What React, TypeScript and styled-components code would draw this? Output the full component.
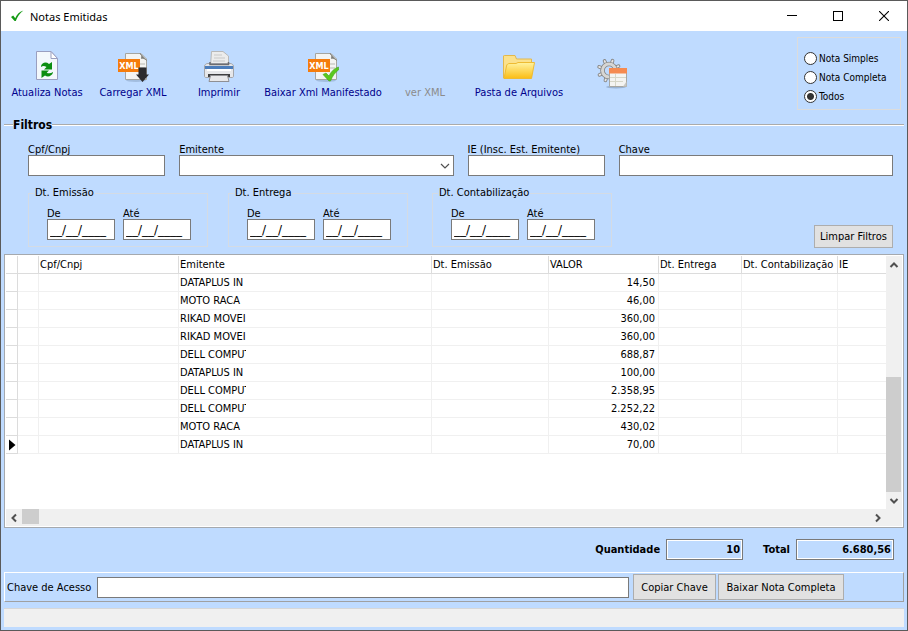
import React, { useState } from "react";
import styled, { createGlobalStyle } from "styled-components";

const UI_FONT = '"DejaVu Sans Condensed", "DejaVu Sans", sans-serif';
const BLUE = "#bfdbff";

const GlobalStyle = createGlobalStyle`
  * { box-sizing: border-box; }
  body { margin: 0; background: ${BLUE}; }
  body, button, input, select { font-family: ${UI_FONT}; font-size: 11px; color: #000; }
  button, input, select { margin: 0; border-radius: 0; }
`;

const Window = styled.div`
  display: flex;
  flex-direction: column;
  min-height: 100vh;
  border: 1px solid #5a5a5a;
  background: ${BLUE};
`;

const TitleBar = styled.header`
  display: flex;
  align-items: center;
  height: 30px;
  padding-left: 9px;
  background: #fff;
`;

const Title = styled.h1`
  flex: 1;
  margin: 0 0 0 6px;
  font: 400 11px "Noto Sans", sans-serif;
`;

const CaptionButton = styled.button`
  display: flex;
  align-items: center;
  justify-content: center;
  width: 46px;
  height: 30px;
  padding: 0;
  border: 0;
  background: none;
`;

const Content = styled.main`
  display: flex;
  flex: 1;
  flex-direction: column;
  padding: 0 3px 3px;
`;

const Toolbar = styled.div`
  display: flex;
  align-items: flex-start;
  gap: 6px;
  height: 87px;
  padding: 6px 3px 0;
`;

const ToolButton = styled.button<{ $width: number; $iconOnly?: boolean }>`
  display: flex;
  flex-direction: column;
  align-items: center;
  justify-content: center;
  gap: 3px;
  width: ${(p) => p.$width}px;
  height: 72px;
  padding: ${(p) => (p.$iconOnly ? 0 : 5)}px 0 0;
  border: 0;
  background: none;
  color: #00008b;
  white-space: nowrap;
  line-height: 14px;
  &:disabled { color: #8b8b8b; }
`;

const IconSlot = styled.span`
  display: block;
  width: 32px;
  height: 32px;
`;

const RadioBox = styled.fieldset`
  width: 104px;
  height: 73px;
  margin: 0 0 0 auto;
  padding: 11px 0 0 6px;
  border: 1px solid #dcdcdc;
`;

const RadioLabel = styled.label`
  display: flex;
  align-items: center;
  gap: 2px;
  height: 19px;
  font-size: 10px;
  line-height: 12px;
  white-space: nowrap;
`;

const Radio = styled.input`
  appearance: none;
  width: 13px;
  height: 13px;
  border: 1px solid #333;
  border-radius: 50%;
  background: #fff;
  &:checked { background: radial-gradient(circle, #333 0 3px, #fff 4px); }
`;

const Filters = styled.fieldset`
  min-width: 0;
  margin: 0;
  padding: 12px 11px 6px 24px;
  border: 0;
  border-top: 2px groove #fff;
`;

const FiltersLegend = styled.legend`
  margin-left: -15px;
  padding: 0;
  font-size: 12px;
  font-weight: 700;
  line-height: 14px;
`;

const FieldRow = styled.div`
  display: flex;
  gap: 14px;
`;

const Field = styled.label<{ $grow?: number }>`
  display: flex;
  flex: ${(p) => (p.$grow ? `${p.$grow} 1 0` : "0 0 68px")};
  flex-direction: column;
  min-width: 0;
  line-height: 11px;
  white-space: nowrap;
`;

const TextBox = styled.input`
  width: 100%;
  height: 21px;
  padding: 0 4px;
  border: 1px solid #7a7a7a;
  background: #fff;
`;

const DateBox = styled(TextBox)`
  padding: 0 2px;
  font-family: "DejaVu Sans", sans-serif;
  font-size: 12px;
`;

const SelectWrap = styled.span`
  display: grid;
  align-items: center;
  > * { grid-area: 1 / 1; }
  > svg { justify-self: end; margin-right: 4px; pointer-events: none; }
`;

const Select = styled.select`
  appearance: none;
  width: 100%;
  height: 21px;
  border: 1px solid #7a7a7a;
  background: #fff;
`;

const DateRow = styled.div`
  display: flex;
  align-items: flex-end;
  justify-content: space-between;
  padding-top: 10px;
`;

const DateGroups = styled.div`
  display: grid;
  grid-template-columns: 200px 204px 180px;
  align-items: end;
  padding-bottom: 1px;
`;

const DateGroup = styled.fieldset`
  display: flex;
  gap: 8px;
  width: 180px;
  margin: 0;
  padding: 8px 0 6px 18px;
  border: 1px solid #d4dbe4;
`;

const GroupLegend = styled.legend`
  margin-left: -13px;
  padding: 0 1px;
  line-height: 14px;
`;

const PushButton = styled.button<{ $width: number; $height: number }>`
  width: ${(p) => p.$width}px;
  height: ${(p) => p.$height}px;
  padding: 0;
  border: 1px solid #adadad;
  background: #e1e1e1;
  white-space: nowrap;
`;

const GridPanel = styled.section`
  display: grid;
  flex: 1;
  grid-template-columns: 1fr 16px;
  grid-template-rows: 1fr 17px;
  min-height: 260px;
  padding: 1px;
  border: 1px solid #a5a9ae;
  background: #fff;
`;

const Table = styled.table`
  width: 100%;
  border-collapse: separate;
  border-spacing: 0;
  table-layout: fixed;
  align-self: start;
`;

const Col = styled.col<{ $width?: number }>`
  width: ${(p) => (p.$width ? `${p.$width}px` : "auto")};
`;

const HeadCell = styled.th`
  height: 18px;
  padding: 0 1px;
  border-right: 1px solid #dcdcdc;
  border-bottom: 1px solid #dcdcdc;
  font-weight: 400;
  line-height: 17px;
  text-align: left;
  white-space: nowrap;
  &:last-child { border-right: 0; }
`;

const Cell = styled.td<{ $numeric?: boolean }>`
  height: 18px;
  padding: 0 ${(p) => (p.$numeric ? 3 : 1)}px 0 1px;
  border-right: 1px solid #f0f0f0;
  border-bottom: 1px solid #f0f0f0;
  line-height: 17px;
  text-align: ${(p) => (p.$numeric ? "right" : "left")};
  &:first-child { border-color: #dcdcdc; padding-left: 3px; }
  &:last-child { border-right: 0; }
  > svg { display: block; }
`;

const ClippedName = styled.span`
  display: block;
  width: 66px;
  overflow: hidden;
  white-space: nowrap;
`;

const ScrollTrack = styled.div<{ $vertical?: boolean }>`
  display: flex;
  flex-direction: ${(p) => (p.$vertical ? "column" : "row")};
  background: #f0f0f0;
`;

const ScrollButton = styled.button`
  display: flex;
  align-items: center;
  justify-content: center;
  width: 16px;
  height: 17px;
  padding: 0;
  border: 0;
  background: none;
`;

const ScrollSpace = styled.div`
  flex: 1;
`;

const ThumbV = styled.div`
  width: 15px;
  height: 115px;
  background: #cdcdcd;
`;

const ThumbH = styled.div`
  width: 17px;
  height: 15px;
  background: #cdcdcd;
`;

const ScrollCorner = styled.div`
  background: #f0f0f0;
`;

const Totals = styled.div`
  display: flex;
  align-items: center;
  justify-content: flex-end;
  gap: 20px;
  height: 44px;
  padding: 0 10px 1px 0;
`;

const TotalField = styled.label`
  display: flex;
  align-items: center;
  gap: 6px;
  font-weight: 700;
`;

const TotalBox = styled.input<{ $width: number }>`
  width: ${(p) => p.$width}px;
  height: 21px;
  padding: 0 2px;
  border: 1px solid #7a7a7a;
  outline: 1px solid #fff;
  outline-offset: -2px;
  background: ${BLUE};
  font-weight: 700;
  text-align: right;
`;

const AccessPanel = styled.div`
  display: flex;
  align-items: center;
  height: 30px;
  padding: 0 59px 0 2px;
  border: 1px solid;
  border-color: #fff #a0a0a0 #a0a0a0 #fff;
`;

const AccessField = styled.label`
  display: flex;
  flex: 1;
  align-items: center;
  gap: 6px;
  margin-right: 4px;
  white-space: nowrap;
`;

const ButtonPair = styled.div`
  display: flex;
  gap: 2px;
`;

const StatusBar = styled.footer`
  height: 19px;
  margin-top: 6px;
  border-top: 1px solid #d7d7d7;
  background: #f0f0f0;
`;

const CheckIcon = () => (
  <svg width="14" height="14" viewBox="0 0 14 14">
    <path d="M1 8 L3.2 6.500 L5.2 9.200 C6.8 5.600 9 3 13.400 1.500 C9.6 4.6 7.4 7.6 5.8 12 L4.600 12 Z" fill="#149a14" />
  </svg>
);

const MinimizeIcon = () => (
  <svg width="10" height="10" viewBox="0 0 10 10"><path d="M0 4.500H10" stroke="#000" /></svg>
);

const MaximizeIcon = () => (
  <svg width="10" height="10" viewBox="0 0 10 10"><rect x="0.5" y="0.5" width="9" height="9" fill="none" stroke="#000" /></svg>
);

const CloseIcon = () => (
  <svg width="10" height="10" viewBox="0 0 10 10"><path d="M0 0L10 10M10 0L0 10" stroke="#000" strokeWidth="1.1" /></svg>
);

const RefreshIcon = () => (
  <svg width="32" height="32" viewBox="0 0 32 32">
    <path d="M5.5 0.500H20L26.500 7.500V28.500H5.500Z" fill="#f3f8fc" stroke="#9a9fc0" />
    <path d="M20 0.500V7.500H26.500Z" fill="#fff" stroke="#9a9fc0" strokeLinejoin="round" />
    <path d="M10 15C11 11.500 15 10.500 18 13L21 11V18.500H13L15.500 16C13.500 14.500 11.500 14.500 10 16Z" fill="#0c8e12" />
    <path d="M22 21.500C21 25 17 26.500 14 24.500L10.500 27V19.500H18L15.700 21.700C17.500 22.700 20 22.500 22 21Z" fill="#0c8e12" />
  </svg>
);

const XmlDocument = () => (
  <>
    <ellipse cx="19" cy="29.500" rx="10" ry="1.500" fill="#7890b0" opacity="0.4" />
    <path d="M8.500 2.500H24L29.500 8V28.500H8.500Z" fill="#f4f4f2" stroke="#a5a5a0" />
    <path d="M23 2.500L29.500 9.500C28 7.500 26 7 24.500 7.500C25 5 24.500 3.500 23 2.500Z" fill="#777" stroke="#8a8a86" />
    <path d="M23 13H28M23 17H28" stroke="#d6d6d2" strokeWidth="2" />
    <rect x="1" y="8" width="22" height="13" fill="#f57c0c" />
    <text x="12" y="18" fill="#fff" fontFamily="DejaVu Sans Condensed" fontSize="9" fontWeight="700" textAnchor="middle">XML</text>
  </>
);

const XmlDownloadIcon = () => (
  <svg width="32" height="32" viewBox="0 0 32 32">
    <XmlDocument />
    <path d="M21.500 16.500H29.500V23.500H32L25.500 31L19 23.500H21.500Z" fill="#2b2b2e" />
  </svg>
);

const XmlCheckIcon = () => (
  <svg width="32" height="32" viewBox="0 0 32 32">
    <XmlDocument />
    <path d="M16 23.500L19 22L22 25C24 20.500 27 17.500 31.500 16V19C28 21.500 25.500 25 23.500 30H22Z" fill="#5ac81e" stroke="#3fa512" strokeWidth="0.6" />
  </svg>
);

const PrinterIcon = () => (
  <svg width="32" height="32" viewBox="0 0 32 32">
    <path d="M8.500 0.500H20L25.500 5V15H7.500Z" fill="#ececec" stroke="#b8b8b8" />
    <path d="M11 4H19M11 7H22M10 10H22" stroke="#d4d4d4" strokeWidth="1.500" />
    <path d="M5 12.500H27C29 12.500 30 13.500 30.500 15V25C30.500 26 30 26.500 29 26.500H3C2 26.500 1.500 26 1.500 25V15C2 13.500 3 12.500 5 12.500Z" fill="#e6e7ea" stroke="#a4a6ab" />
    <path d="M7 11V13.500H25.500V11" fill="none" stroke="#6c6c70" strokeWidth="1.500" />
    <path d="M2 15H30V18H2Z" fill="#4c7dbb" />
    <path d="M4 18H28V20H4Z" fill="#fff" />
    <path d="M5 23H27V26H5Z" fill="#3e3e40" />
    <path d="M7.500 24.500H24.500L26 30.500H6Z" fill="#e8e8ea" stroke="#8f8f93" />
  </svg>
);

const FolderIcon = () => (
  <svg width="32" height="32" viewBox="0 0 32 32">
    <defs>
      <linearGradient id="folderFront" x1="0" y1="0" x2="0" y2="1">
        <stop offset="0" stopColor="#fff3a0" />
        <stop offset="1" stopColor="#fbbd14" />
      </linearGradient>
    </defs>
    <path d="M0.500 27V5C0.500 4.500 1 4.500 1.500 4.500H12L13.500 8H28.500V26Z" fill="#fbe18c" stroke="#e3b84c" />
    <path d="M3.500 15C4 13 5 12.500 7 12.500H13L15 11.500H31.500L28.500 27.500H1Z" fill="url(#folderFront)" stroke="#eebb33" />
  </svg>
);

const TEETH = [0, 45, 90, 135, 180, 225, 270, 315];

const GearSheetIcon = () => (
  <svg width="32" height="32" viewBox="0 0 32 32">
    <ellipse cx="20" cy="30" rx="10" ry="1.500" fill="#60758f" opacity="0.4" />
    {TEETH.map((angle) => (
      <g key={angle} transform={`rotate(${angle + 20} 13 13.500)`} strokeLinecap="round">
        <path d="M13 7V3" stroke="#858585" strokeWidth="3.600" />
        <path d="M13 7V3" stroke="#e6e6e6" strokeWidth="1.800" />
      </g>
    ))}
    <circle cx="13" cy="13.500" r="6.500" fill="none" stroke="#858585" strokeWidth="4.600" />
    <circle cx="13" cy="13.500" r="6.500" fill="none" stroke="#d6d6d4" strokeWidth="3" />
    <path d="M13.500 11.500H30.500V29.500H13.500Z" fill="#f4f4f2" stroke="#a7a7a3" />
    <path d="M13 11H31V16.500H13Z" fill="#f58a50" />
    <path d="M14 20.500H30M14 24.500H27M19.500 17V29" stroke="#d6d6c8" />
    <path d="M30.500 24.500L27 29.500H30.500Z" fill="#c8c8c4" />
  </svg>
);

const rotations = { up: 0, right: 90, down: 180, left: 270 };

const ArrowIcon = ({ dir, thin }: { dir: keyof typeof rotations; thin?: boolean }) => (
  <svg width="10" height="10" viewBox="0 0 10 10">
    <path
      d={thin ? "M1 7L5 3L9 7" : "M1.500 7L5 3.500L8.500 7"}
      fill="none"
      stroke="#505050"
      strokeWidth={thin ? 1.2 : 2}
      transform={`rotate(${rotations[dir]} 5 5)`}
    />
  </svg>
);

const RowMarker = () => (
  <svg width="8" height="12" viewBox="0 0 8 12"><path d="M0 0.500L6.500 6L0 11.500Z" fill="#000" /></svg>
);

const tools = [
  { label: "Atualiza Notas", width: 80, icon: <RefreshIcon /> },
  { label: "Carregar XML", width: 80, icon: <XmlDownloadIcon /> },
  { label: "Imprimir", width: 80, icon: <PrinterIcon /> },
  { label: "Baixar Xml Manifestado", width: 116, icon: <XmlCheckIcon /> },
  { label: "ver XML", width: 76, icon: null, disabled: true },
  { label: "Pasta de Arquivos", width: 100, icon: <FolderIcon /> },
  { label: "", width: 74, icon: <GearSheetIcon /> },
];

const columns = [
  { title: "", width: 12 },
  { title: "", width: 21 },
  { title: "Cpf/Cnpj", width: 140 },
  { title: "Emitente", width: 253 },
  { title: "Dt. Emissão", width: 117 },
  { title: "VALOR", width: 110 },
  { title: "Dt. Entrega", width: 83 },
  { title: "Dt. Contabilização", width: 96 },
  { title: "IE" },
];

const rows = [
  ["DATAPLUS IN", "14,50"],
  ["MOTO RACA", "46,00"],
  ["RIKAD MOVEI", "360,00"],
  ["RIKAD MOVEI", "360,00"],
  ["DELL COMPUT", "688,87"],
  ["DATAPLUS IN", "100,00"],
  ["DELL COMPUT", "2.358,95"],
  ["DELL COMPUT", "2.252,22"],
  ["MOTO RACA", "430,02"],
  ["DATAPLUS IN", "70,00"],
];

const kinds = ["Nota Simples", "Nota Completa", "Todos"];
const dateGroups = ["Dt. Emissão", "Dt. Entrega", "Dt. Contabilização"];

export default function App() {
  const [kind, setKind] = useState("Todos");

  return (
    <Window>
      <GlobalStyle />
      <TitleBar>
        <CheckIcon />
        <Title>Notas Emitidas</Title>
        <CaptionButton aria-label="Minimizar"><MinimizeIcon /></CaptionButton>
        <CaptionButton aria-label="Maximizar"><MaximizeIcon /></CaptionButton>
        <CaptionButton aria-label="Fechar"><CloseIcon /></CaptionButton>
      </TitleBar>
      <Content>
        <Toolbar>
          {tools.map((t) => (
            <ToolButton
              key={t.label}
              $width={t.width}
              $iconOnly={!t.label}
              disabled={t.disabled}
              aria-label={t.label || "Configurações"}
            >
              <IconSlot>{t.icon}</IconSlot>
              {t.label}
            </ToolButton>
          ))}
          <RadioBox>
            {kinds.map((k) => (
              <RadioLabel key={k}>
                <Radio type="radio" name="kind" checked={kind === k} onChange={() => setKind(k)} />
                {k}
              </RadioLabel>
            ))}
          </RadioBox>
        </Toolbar>

        <Filters>
          <FiltersLegend>Filtros</FiltersLegend>
          <FieldRow>
            <Field $grow={1}>Cpf/Cnpj<TextBox /></Field>
            <Field $grow={2}>
              Emitente
              <SelectWrap>
                <Select><option></option></Select>
                <ArrowIcon dir="down" thin />
              </SelectWrap>
            </Field>
            <Field $grow={1}>IE (Insc. Est. Emitente)<TextBox /></Field>
            <Field $grow={2}>Chave<TextBox /></Field>
          </FieldRow>
          <DateRow>
            <DateGroups>
              {dateGroups.map((g) => (
                <DateGroup key={g}>
                  <GroupLegend>{g}</GroupLegend>
                  <Field>De<DateBox defaultValue="__/__/____" /></Field>
                  <Field>Até<DateBox defaultValue="__/__/____" /></Field>
                </DateGroup>
              ))}
            </DateGroups>
            <PushButton $width={79} $height={23}>Limpar Filtros</PushButton>
          </DateRow>
        </Filters>

        <GridPanel>
          <Table>
            <colgroup>
              {columns.map((c, i) => <Col key={i} $width={c.width} />)}
            </colgroup>
            <thead>
              <tr>{columns.map((c, i) => <HeadCell key={i}>{c.title}</HeadCell>)}</tr>
            </thead>
            <tbody>
              {rows.map(([name, value], i) => (
                <tr key={i}>
                  <Cell>{i === rows.length - 1 && <RowMarker />}</Cell>
                  <Cell />
                  <Cell />
                  <Cell><ClippedName>{name}</ClippedName></Cell>
                  <Cell />
                  <Cell $numeric>{value}</Cell>
                  <Cell />
                  <Cell />
                  <Cell />
                </tr>
              ))}
            </tbody>
          </Table>
          <ScrollTrack $vertical>
            <ScrollButton aria-label="Rolar para cima"><ArrowIcon dir="up" /></ScrollButton>
            <ScrollSpace />
            <ThumbV />
            <ScrollButton aria-label="Rolar para baixo"><ArrowIcon dir="down" /></ScrollButton>
          </ScrollTrack>
          <ScrollTrack>
            <ScrollButton aria-label="Rolar para a esquerda"><ArrowIcon dir="left" /></ScrollButton>
            <ThumbH />
            <ScrollSpace />
            <ScrollButton aria-label="Rolar para a direita"><ArrowIcon dir="right" /></ScrollButton>
          </ScrollTrack>
          <ScrollCorner />
        </GridPanel>

        <Totals>
          <TotalField>Quantidade<TotalBox $width={77} readOnly value="10" /></TotalField>
          <TotalField>Total<TotalBox $width={98} readOnly value="6.680,56" /></TotalField>
        </Totals>

        <AccessPanel>
          <AccessField>Chave de Acesso<TextBox /></AccessField>
          <ButtonPair>
            <PushButton $width={83} $height={26}>Copiar Chave</PushButton>
            <PushButton $width={126} $height={26}>Baixar Nota Completa</PushButton>
          </ButtonPair>
        </AccessPanel>
        <StatusBar />
      </Content>
    </Window>
  );
}
